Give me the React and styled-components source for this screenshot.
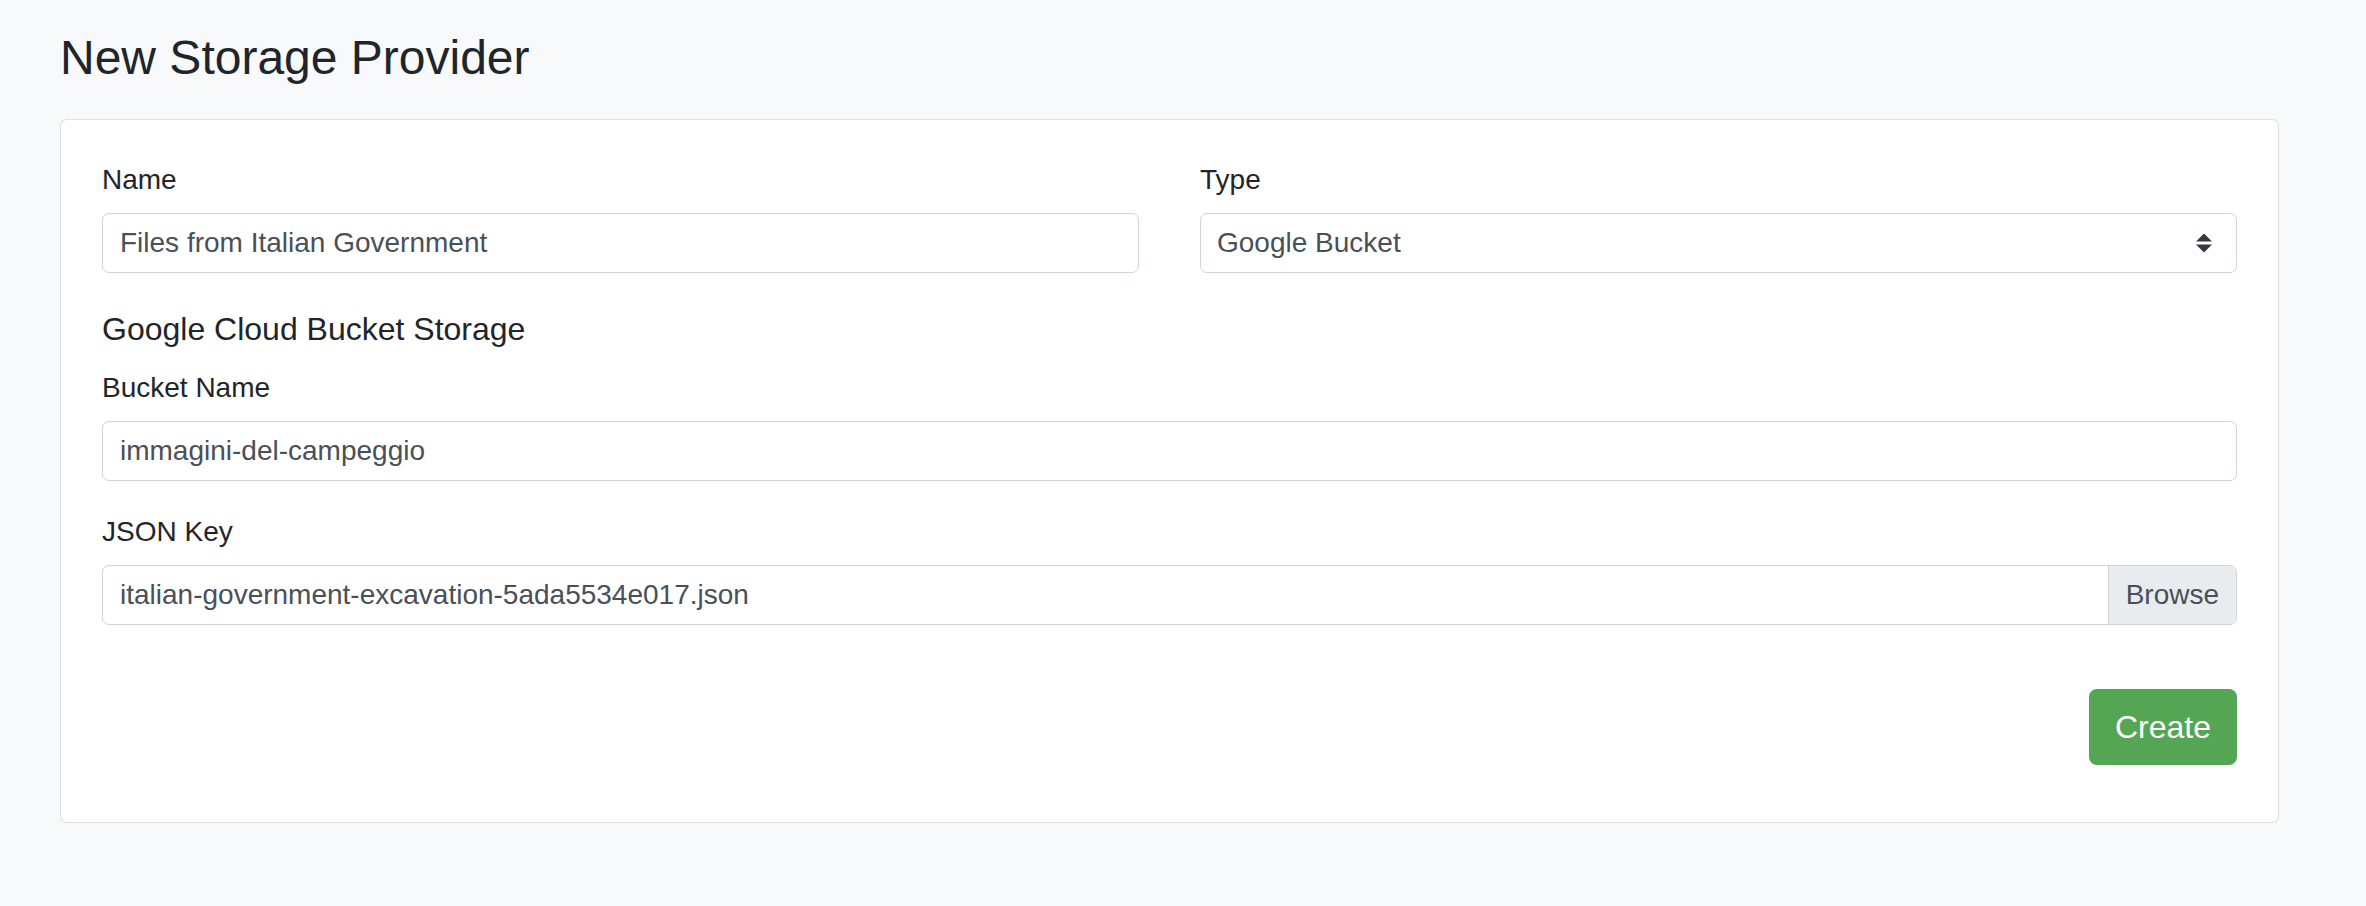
import React from 'react';
import styled, { createGlobalStyle } from 'styled-components';

const GlobalStyle = createGlobalStyle`
  html, body {
    margin: 0;
    padding: 0;
    background: #f8f9fa;
  }
  body {
    font-family: "Liberation Sans", Arial, Helvetica, sans-serif;
    color: #212529;
  }
  * {
    box-sizing: border-box;
  }
`

const Page = styled.div`
  padding: 29px 87px 40px 60px;
`

const Title = styled.h2`
  margin: 0 0 32px;
  font-size: 48px;
  font-weight: 500;
  line-height: 1.2;
  color: #212529;
`

const Card = styled.form`
  background: #fff;
  border: 1px solid rgba(0, 0, 0, 0.125);
  border-radius: 7px;
  padding: 37px 41px 37px 41px;
`

const Row = styled.div`
  display: grid;
  grid-template-columns: 1fr 1fr;
  column-gap: 61px;
`

const Group = styled.div`
  margin-bottom: ${props => props.last ? '0' : '28px'};
`

const Label = styled.label`
  display: block;
  font-size: 28px;
  line-height: 42px;
  padding-top: 2px;
  margin-bottom: 12px;
  color: #212529;
`

const Section = styled.h5`
  margin: 9px 0 17px;
  font-size: 32px;
  font-weight: 500;
  line-height: 1.2;
  color: #212529;
`

const Input = styled.input`
  display: block;
  width: 100%;
  height: 60px;
  padding: 0 17px;
  font-family: inherit;
  font-size: 28px;
  color: #495057;
  background: #fff;
  border: 1px solid #ced4da;
  border-radius: 7px;

  &:focus {
    outline: none;
  }
`

const SelectWrap = styled.div`
  position: relative;
`

const Select = styled.select`
  display: block;
  width: 100%;
  height: 60px;
  padding: 0 60px 0 16px;
  font-family: inherit;
  font-size: 28px;
  color: #495057;
  background: #fff;
  border: 1px solid #ced4da;
  border-radius: 7px;
  appearance: none;
  -webkit-appearance: none;

  &:focus {
    outline: none;
  }
`

const Caret = styled.svg`
  position: absolute;
  right: 25px;
  top: 50%;
  transform: translateY(-50%);
  pointer-events: none;
`

const FileBox = styled.div`
  display: flex;
  height: 60px;
  border: 1px solid #ced4da;
  border-radius: 7px;
  overflow: hidden;
  background: #fff;
`

const FileName = styled.div`
  flex: 1;
  display: flex;
  align-items: center;
  padding: 0 17px;
  font-size: 28px;
  color: #495057;
`

const Browse = styled.div`
  display: flex;
  align-items: center;
  padding: 0 17px;
  font-size: 28px;
  color: #495057;
  background: #e9ecef;
  border-left: 1px solid #ced4da;
`

const Actions = styled.div`
  display: flex;
  justify-content: flex-end;
  margin-top: 64px;
  margin-bottom: 20px;
`

const Button = styled.button`
  font-family: inherit;
  font-size: 32px;
  line-height: 48px;
  padding: 14px 26px;
  color: #fff;
  background: #55a654;
  border: none;
  border-radius: 8px;
  cursor: pointer;
`

const App = () => {
  return (
    <>
      <GlobalStyle />
      <Page>
        <Title>New Storage Provider</Title>
        <Card onSubmit={e => e.preventDefault()}>
          <Row>
            <Group>
              <Label>Name</Label>
              <Input defaultValue="Files from Italian Government" />
            </Group>
            <Group>
              <Label>Type</Label>
              <SelectWrap>
                <Select defaultValue="google">
                  <option value="google">Google Bucket</option>
                  <option value="s3">Amazon S3</option>
                </Select>
                <Caret width="16" height="19" viewBox="0 0 16 19">
                  <polygon points="0,8 8,0 16,8" fill="#343a40" />
                  <polygon points="0,11 16,11 8,19" fill="#343a40" />
                </Caret>
              </SelectWrap>
            </Group>
          </Row>
          <Section>Google Cloud Bucket Storage</Section>
          <Group>
            <Label>Bucket Name</Label>
            <Input defaultValue="immagini-del-campeggio" />
          </Group>
          <Group last>
            <Label>JSON Key</Label>
            <FileBox>
              <FileName>italian-government-excavation-5ada5534e017.json</FileName>
              <Browse>Browse</Browse>
            </FileBox>
          </Group>
          <Actions>
            <Button type="submit">Create</Button>
          </Actions>
        </Card>
      </Page>
    </>
  );
}

export default App;
